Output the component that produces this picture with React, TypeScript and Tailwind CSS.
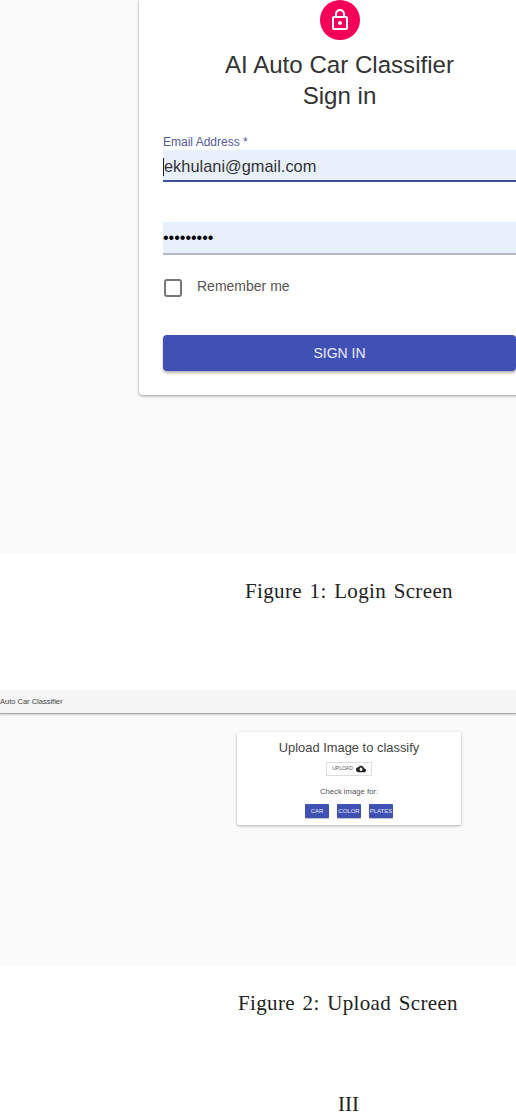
const sans = { fontFamily: '"Liberation Sans", Arial, sans-serif' };

function LockIcon() {
  return (
    <svg className="w-6 h-6 fill-white" viewBox="0 0 24 24">
      <path d="M18 8h-1V6c0-2.76-2.24-5-5-5S7 3.24 7 6v2H6c-1.1 0-2 .9-2 2v10c0 1.1.9 2 2 2h12c1.1 0 2-.9 2-2V10c0-1.1-.9-2-2-2zM9 6c0-1.66 1.34-3 3-3s3 1.34 3 3v2H9V6zm9 14H6V10h12v10zm-6-3c1.1 0 2-.9 2-2s-.9-2-2-2-2 .9-2 2 .9 2 2 2z" />
    </svg>
  );
}

function CloudIcon() {
  return (
    <svg className="w-[10px] h-[10px] fill-[#222]" viewBox="0 0 24 24">
      <path d="M19.35 10.04C18.67 6.59 15.64 4 12 4 9.11 4 6.6 5.64 5.35 8.04 2.34 8.36 0 10.91 0 14c0 3.31 2.69 6 6 6h13c2.76 0 5-2.24 5-5 0-2.64-2.05-4.78-4.65-4.96zM14 13v4h-4v-4H7l5-5 5 5h-3z" />
    </svg>
  );
}

function Caption({ children }: { children: React.ReactNode }) {
  return (
    <p className="font-['Liberation_Serif',serif] text-[21px] leading-6 text-[#222] tracking-[0.35px] [word-spacing:2px]">
      {children}
    </p>
  );
}

function LoginShot() {
  return (
    <div className="h-[553px] bg-[#fafafa] overflow-hidden">
      <div className="ml-[139px] w-[401px] h-[395px] bg-white rounded-b-[4px] shadow-[0_1px_3px_rgba(0,0,0,0.4)] px-6 flex flex-col">
        <div className="self-center w-10 h-10 rounded-full bg-[#f50057] flex items-center justify-center">
          <LockIcon />
        </div>
        <h1 className="mt-[9px] text-center text-[24.1px] leading-[31px] text-[#333]">
          AI Auto Car Classifier
          <br />
          Sign in
        </h1>
        <label className="mt-[24px] text-[12px] leading-[14px] text-[#55599a]">Email Address *</label>
        <div className="mt-px h-[32px] pt-[3px] bg-[#e8f0fe] border-b-2 border-[#3f4f9f] flex items-center text-[16.4px] text-[#333]">
          <span className="w-px h-[18px] bg-[#222]" />
          <span>ekhulani@gmail.com</span>
        </div>
        <div className="mt-[40px] h-[33px] bg-[#e8f0fe] border-b-2 border-[#b4b9c2] flex items-center text-[16px] text-black">
          •••••••••
        </div>
        <div className="mt-[22px] flex items-center">
          <span className="ml-px w-[18px] h-[18px] border-2 border-[#777] rounded-[3px]" />
          <span className="ml-[15px] -translate-y-px text-[14px] text-[#555]">Remember me</span>
        </div>
        <button className="mt-[37px] h-[36px] bg-[#3f51b5] rounded-[4px] text-white/90 text-[14px] shadow-[0_2px_3px_rgba(0,0,0,0.3)]">
          SIGN IN
        </button>
      </div>
    </div>
  );
}

function UploadShot() {
  return (
    <div className="h-[276px] bg-[#fafafa] overflow-hidden">
      <div className="h-6 pt-px bg-[#f5f5f5] border-b border-[#aaa] shadow-[0_1px_2px_rgba(0,0,0,0.2)] flex items-center text-[7.5px] text-[#444]">
        Auto Car Classifier
      </div>
      <div className="mt-[18px] ml-[237px] w-[224px] h-[93px] bg-white rounded-[2px] shadow-[0_1px_3px_rgba(0,0,0,0.3)] flex flex-col items-center">
        <p className="mt-[8px] text-[12.9px] leading-4 text-[#444]">Upload Image to classify</p>
        <div className="mt-[6px] w-[46px] h-[14px] border border-[#ddd] flex items-center justify-center gap-[3px] text-[5px] text-[#555]">
          UPLOAD
          <CloudIcon />
        </div>
        <p className="mt-[11px] text-[7.7px] leading-[9px] text-[#555]">Check image for:</p>
        <div className="mt-[8px] flex gap-2">
          {['CAR', 'COLOR', 'PLATES'].map(label => (
            <button
              key={label}
              className="w-6 h-[14px] bg-[#3f51b5] rounded-[1px] text-[6px] text-white/85 shadow-[0_1px_1px_rgba(0,0,0,0.25)]"
            >
              {label}
            </button>
          ))}
        </div>
      </div>
    </div>
  );
}

export default function App() {
  return (
    <div className="w-[516px] h-[1112px] bg-white overflow-hidden" style={sans}>
      <LoginShot />
      <div className="mt-[26px] pl-[245px]">
        <Caption>Figure 1: Login Screen</Caption>
      </div>
      <div className="mt-[87px]">
        <UploadShot />
      </div>
      <div className="mt-[25px] pl-[238px]">
        <Caption>Figure 2: Upload Screen</Caption>
      </div>
      <p className="mt-[81px] text-center pl-[181px] font-['Liberation_Serif',serif] text-[21px] leading-4 text-[#222]">III</p>
    </div>
  );
}
